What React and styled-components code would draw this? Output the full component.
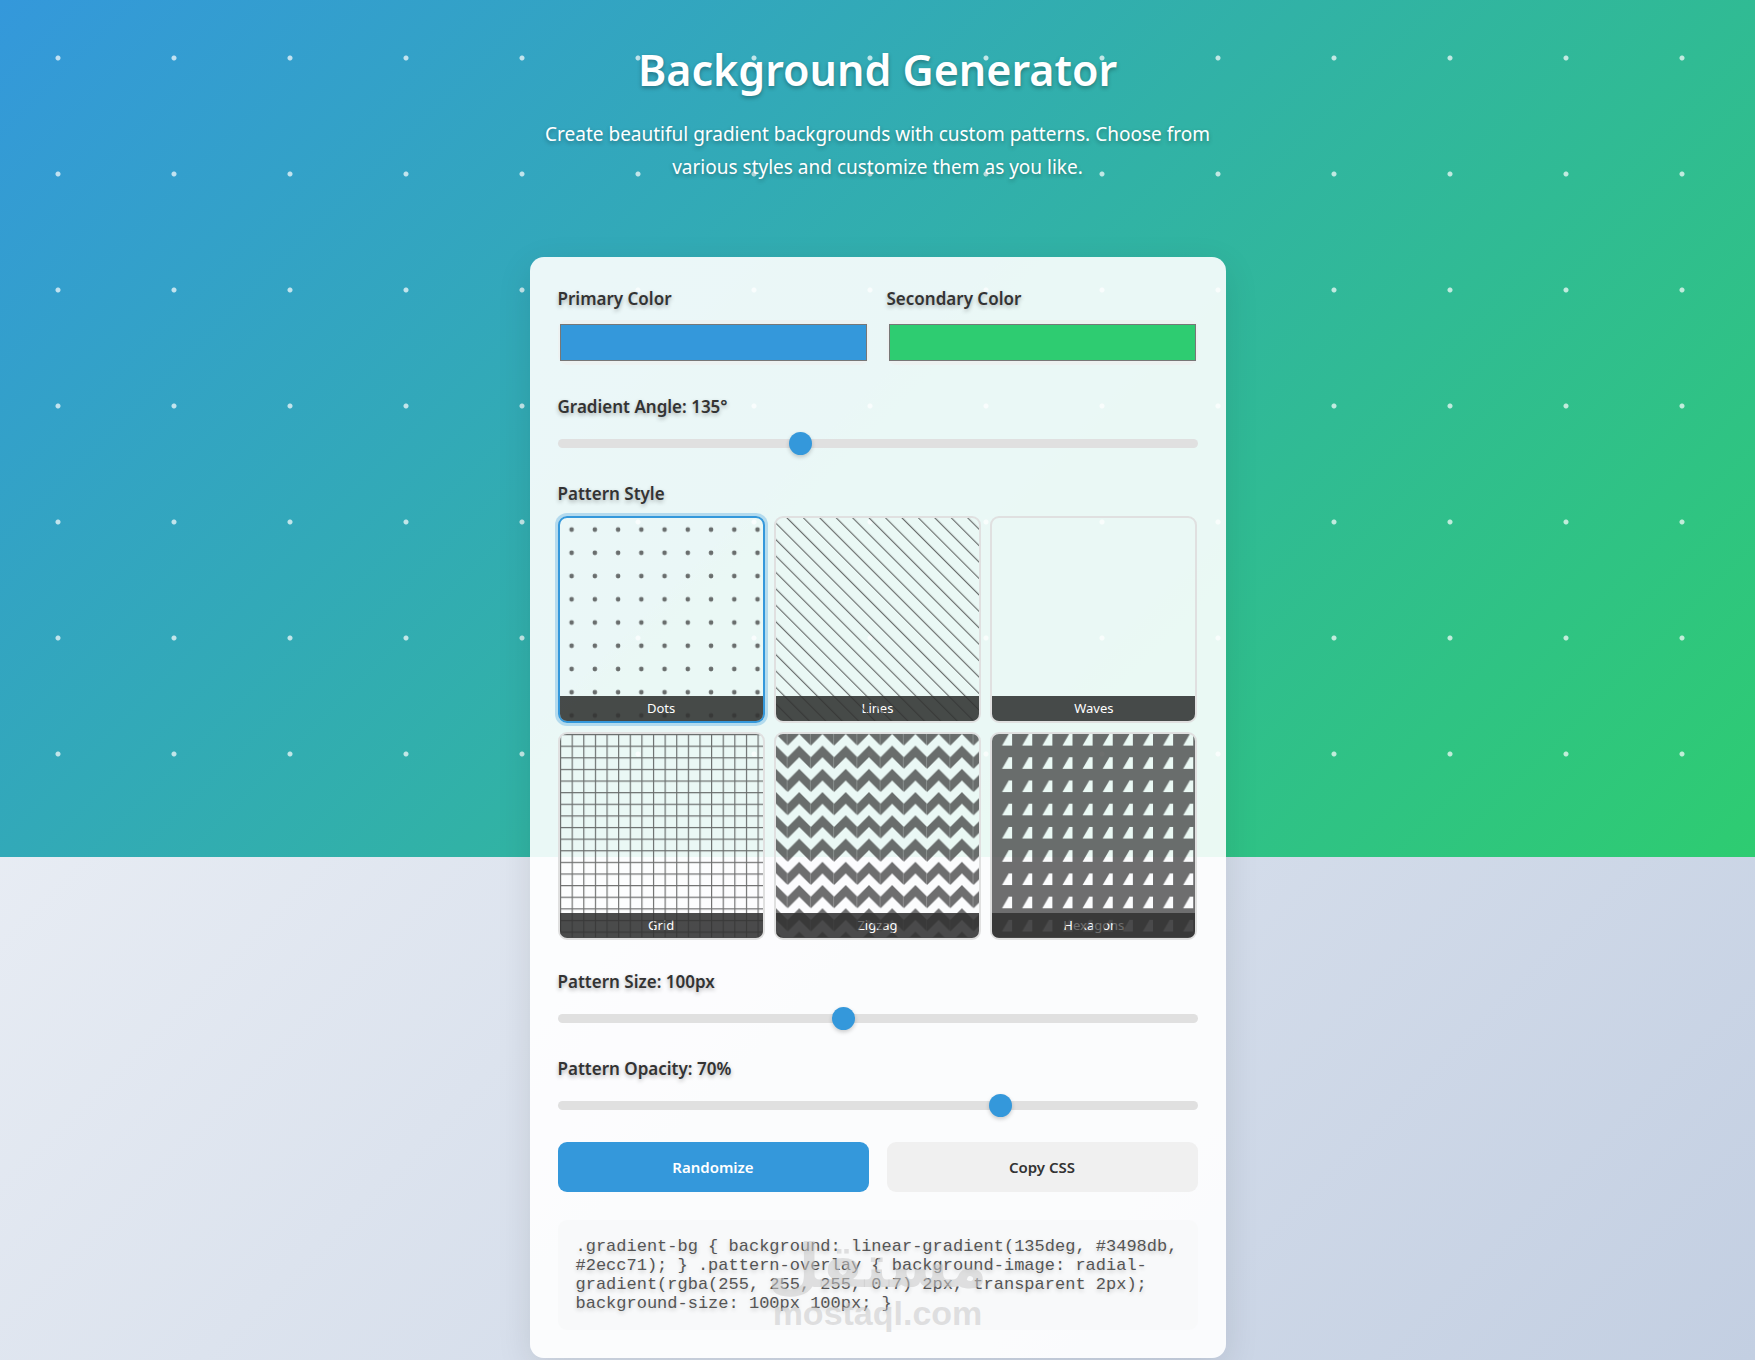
import { useState } from "react";
import styled, { createGlobalStyle, css } from "styled-components";

const SCALE = 1.16;

const patterns = ["Dots", "Lines", "Waves", "Grid", "Zigzag", "Hexagons"];

const randomHex = () =>
  "#" +
  Math.floor(Math.random() * 0xffffff)
    .toString(16)
    .padStart(6, "0");

// One repeated cell for each pattern
function PatternCell({ name }) {
  switch (name) {
    case "Dots":
      return (
        <pattern id={name} width="20" height="20" patternUnits="userSpaceOnUse">
          <circle cx="10" cy="10" r="2" />
        </pattern>
      );
    case "Lines":
      return (
        <pattern
          id={name}
          width="10"
          height="10"
          patternUnits="userSpaceOnUse"
          patternTransform="translate(0 175) rotate(-45)"
        >
          <rect width="1" height="10" />
        </pattern>
      );
    case "Grid":
      return (
        <pattern id={name} width="10" height="10" patternUnits="userSpaceOnUse">
          <path d="M0 0H10V1H1V10H0z" />
        </pattern>
      );
    case "Zigzag":
      return (
        <pattern id={name} width="20" height="20" patternUnits="userSpaceOnUse">
          <path d="M0 10L9.8 19.8V20H0z M20 10L10 20H20z" />
          <path d="M0 0H9.8V9.8z M10 0H20L10 10z" />
        </pattern>
      );
    case "Hexagons":
      return (
        <pattern
          id={name}
          width="17.32"
          height="20"
          patternUnits="userSpaceOnUse"
        >
          <path d="M0 0H14.43L8.66 10H17.32V20H0z" />
        </pattern>
      );
    default:
      return null;
  }
}

function RangeField({ id, label, ...rest }) {
  return (
    <Field>
      <Label htmlFor={id}>{label}</Label>
      <Slider id={id} type="range" {...rest} />
    </Field>
  );
}

function App() {
  const [primary, setPrimary] = useState("#3498db");
  const [secondary, setSecondary] = useState("#2ecc71");
  const [angle, setAngle] = useState(135);
  const [pattern, setPattern] = useState("Dots");
  const [size, setSize] = useState(100);
  const [opacity, setOpacity] = useState(70);

  const code = `.gradient-bg { background: linear-gradient(${angle}deg, ${primary}, ${secondary}); } .pattern-overlay { background-image: radial-gradient(rgba(255, 255, 255, ${
    opacity / 100
  }) 2px, transparent 2px); background-size: ${size}px ${size}px; }`;

  const randomize = () => {
    setPrimary(randomHex());
    setSecondary(randomHex());
    setAngle(Math.floor(Math.random() * 360));
  };

  return (
    <>
      <GlobalStyle />
      <Backdrop
        style={{
          backgroundImage: `radial-gradient(rgba(255, 255, 255, ${
            opacity / 100
          }) 2px, transparent 3px), linear-gradient(${angle}deg, ${primary}, ${secondary})`,
          backgroundSize: `${size * SCALE}px ${size * SCALE}px, 100% 100%`,
        }}
      />
      <Page>
        <Header>
          <Title>Background Generator</Title>
          <Intro>
            Create beautiful gradient backgrounds with custom patterns. Choose
            from various styles and customize them as you like.
          </Intro>
        </Header>
        <Card>
          <TwoColumns>
            <div>
              <Label htmlFor="primary">Primary Color</Label>
              <ColorInput
                id="primary"
                type="color"
                value={primary}
                onChange={(e) => setPrimary(e.target.value)}
              />
            </div>
            <div>
              <Label htmlFor="secondary">Secondary Color</Label>
              <ColorInput
                id="secondary"
                type="color"
                value={secondary}
                onChange={(e) => setSecondary(e.target.value)}
              />
            </div>
          </TwoColumns>
          <RangeField
            id="angle"
            label={`Gradient Angle: ${angle}°`}
            min={0}
            max={360}
            value={angle}
            onChange={(e) => setAngle(+e.target.value)}
          />
          <Field>
            <Label as="p" id="pattern-label">
              Pattern Style
            </Label>
            <PatternGrid role="group" aria-labelledby="pattern-label">
              {patterns.map((name) => (
                <Tile
                  key={name}
                  type="button"
                  $active={name === pattern}
                  aria-pressed={name === pattern}
                  onClick={() => setPattern(name)}
                >
                  <TileName>{name}</TileName>
                  <TilePattern viewBox="0 0 175 175" aria-hidden="true">
                    <defs>
                      <PatternCell name={name} />
                    </defs>
                    {name !== "Waves" && (
                      <rect width="175" height="175" fill={`url(#${name})`} />
                    )}
                  </TilePattern>
                </Tile>
              ))}
            </PatternGrid>
          </Field>
          <RangeField
            id="size"
            label={`Pattern Size: ${size}px`}
            min={20}
            max={200}
            value={size}
            onChange={(e) => setSize(+e.target.value)}
          />
          <RangeField
            id="opacity"
            label={`Pattern Opacity: ${opacity}%`}
            min={0}
            max={100}
            value={opacity}
            onChange={(e) => setOpacity(+e.target.value)}
          />
          <TwoColumns>
            <Button type="button" $primary onClick={randomize}>
              Randomize
            </Button>
            <Button
              type="button"
              onClick={() => navigator.clipboard?.writeText(code)}
            >
              Copy CSS
            </Button>
          </TwoColumns>
          <CodeBox>
            <code>{code}</code>
            <Watermark>
              <WatermarkArabic lang="ar">مستقل</WatermarkArabic>
              <WatermarkLatin>mostaql.com</WatermarkLatin>
            </Watermark>
          </CodeBox>
        </Card>
      </Page>
    </>
  );
}

export default App;

const GlobalStyle = createGlobalStyle`
  * {
    box-sizing: border-box;
    margin: 0;
    padding: 0;
  }
  body {
    min-height: 100vh;
    background: linear-gradient(135deg, #f5f7fa 0%, #c3cfe2 100%);
    color: #333;
    font-family: "Noto Sans", "Open Sans", sans-serif;
  }
`;
const Backdrop = styled.div`
  position: absolute;
  top: 0;
  left: 0;
  width: 100%;
  height: 63vh;
`;
const Page = styled.div`
  position: relative;
  max-width: 1392px;
  margin: 0 auto;
  padding: 34px 20px 0;
`;
const Header = styled.header`
  max-width: 696px;
  margin: 0 auto 73px;
  text-align: center;
  color: #fff;
  text-shadow: 0 2px 4px rgba(0, 0, 0, 0.3);
`;
const Title = styled.h1`
  font-size: 43px;
  font-weight: 600;
  line-height: 72px;
  margin-bottom: 12px;
`;
const Intro = styled.p`
  font-size: 19px;
  line-height: 33px;
`;
const Card = styled.main`
  display: flex;
  flex-direction: column;
  gap: 28px;
  max-width: 696px;
  margin: 0 auto;
  padding: 28px;
  border-radius: 14px;
  background: rgba(255, 255, 255, 0.9);
  box-shadow: 0 10px 35px rgba(0, 0, 0, 0.1);
`;
const TwoColumns = styled.div`
  display: grid;
  grid-template-columns: 1fr 1fr;
  gap: 18px;
`;
const Field = styled.div`
  display: flex;
  flex-direction: column;
`;
const Label = styled.label`
  display: block;
  margin-bottom: 7px;
  font-size: 17px;
  font-weight: 600;
  line-height: 28px;
  text-shadow: 0 2px 4px rgba(0, 0, 0, 0.3);
`;
const ColorInput = styled.input`
  display: block;
  width: 100%;
  height: 45px;
  border: none;
  border-radius: 9px;
  background: rgba(239, 239, 239, 0.6);
  cursor: pointer;
  &::-webkit-color-swatch-wrapper {
    padding: 4px 2px;
  }
  &::-webkit-color-swatch {
    border: 1px solid #777;
    border-radius: 0;
  }
`;
const Slider = styled.input`
  appearance: none;
  width: 100%;
  height: 9px;
  margin: 11px 0 4px;
  border-radius: 5px;
  background: #e0e0e0;
  outline: none;
  &::-webkit-slider-thumb {
    appearance: none;
    width: 23px;
    height: 23px;
    border-radius: 50%;
    background: #3498db;
    box-shadow: 0 2px 4px rgba(0, 0, 0, 0.2);
    cursor: pointer;
  }
`;
const PatternGrid = styled.div`
  display: grid;
  grid-template-columns: repeat(3, 1fr);
  gap: 9px;
  margin-top: 1px;
`;
const Tile = styled.button`
  position: relative;
  display: flex;
  flex-direction: column;
  justify-content: flex-end;
  aspect-ratio: 1;
  border: 2px solid #e0e0e0;
  border-radius: 9px;
  background: none;
  overflow: hidden;
  cursor: pointer;
  ${({ $active }) =>
    $active &&
    css`
      border-color: #3498db;
      box-shadow: 0 0 0 3px rgba(52, 152, 219, 0.3);
    `}
`;
const TileName = styled.span`
  width: 100%;
  background: rgba(0, 0, 0, 0.7);
  color: #fff;
  font-family: "Noto Sans", "Open Sans", sans-serif;
  font-size: 13px;
  line-height: 25px;
  text-align: center;
`;
const TilePattern = styled.svg`
  position: absolute;
  inset: 0;
  width: 100%;
  height: 100%;
  fill: #333;
  opacity: 0.7;
`;
const Button = styled.button`
  height: 50px;
  border: none;
  border-radius: 9px;
  background: ${({ $primary }) => ($primary ? "#3498db" : "#f0f0f0")};
  color: ${({ $primary }) => ($primary ? "#fff" : "#333")};
  font-family: "Noto Sans", "Open Sans", sans-serif;
  font-size: 15px;
  font-weight: 600;
  cursor: pointer;
`;
const CodeBox = styled.div`
  position: relative;
  padding: 17px 18px;
  border-radius: 9px;
  background: #f8f9fa;
  color: #555;
  line-height: 19px;
  text-shadow: 0 2px 4px rgba(0, 0, 0, 0.2);
  code {
    display: block;
    font-family: "Liberation Mono", monospace;
    font-size: 17px;
  }
`;
const Watermark = styled.div`
  position: absolute;
  inset: 0;
  display: flex;
  flex-direction: column;
  align-items: center;
  justify-content: flex-end;
  color: rgba(200, 200, 200, 0.55);
  font-weight: bold;
  text-shadow: none;
  pointer-events: none;
`;
const WatermarkArabic = styled.span`
  font-family: "DejaVu Sans", sans-serif;
  font-size: 60px;
  line-height: 60px;
`;
const WatermarkLatin = styled.span`
  font-family: "Liberation Sans", sans-serif;
  font-size: 34px;
  line-height: 34px;
`;
